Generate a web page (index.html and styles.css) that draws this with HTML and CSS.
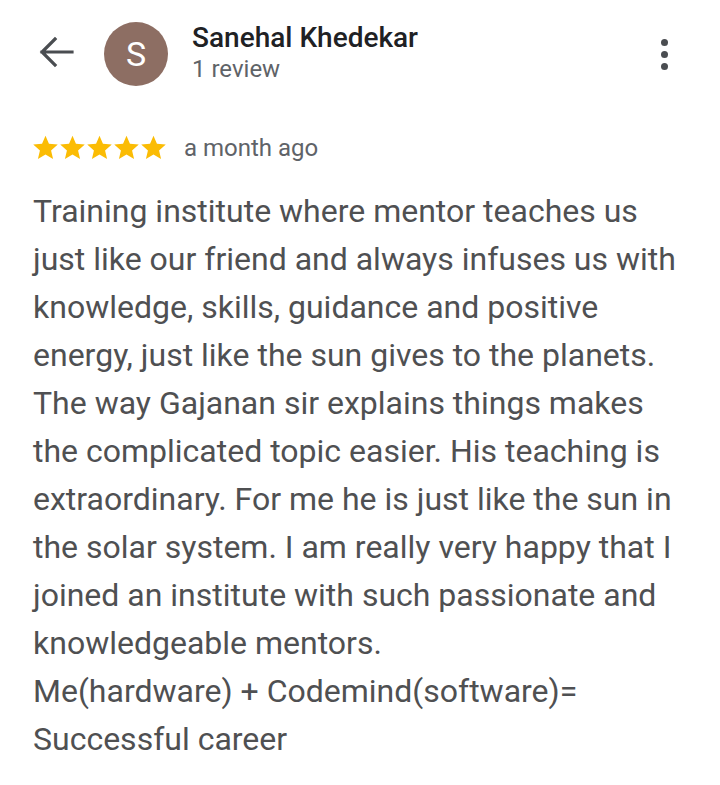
FILE: index.html
```html
<!DOCTYPE html>
<html>
<head>
<meta charset="utf-8">
<link rel="stylesheet" href="styles.css">
</head>
<body>
<div class="page">
  <header class="top">
    <button class="back" aria-label="Back">
      <svg width="36" height="36" viewBox="0 0 36 36"><path d="M34 16H4M17 3L4 16l13 13" fill="none" stroke="#4a4d51" stroke-width="3.2" stroke-linecap="square"/></svg>
    </button>
    <div class="avatar">S</div>
    <div class="who">
      <div class="name">Sanehal Khedekar</div>
      <div class="count">1 review</div>
    </div>
    <button class="more" aria-label="More">
      <span></span><span></span><span></span>
    </button>
  </header>
  <div class="meta">
    <div class="stars">
      <svg viewBox="1 1.5 22 21"><path d="M12 17.27L18.18 21l-1.64-7.03L22 9.24l-7.19-.61L12 2 9.19 8.63 2 9.24l5.46 4.730L5.82 21z"/></svg>
      <svg viewBox="1 1.5 22 21"><path d="M12 17.27L18.18 21l-1.64-7.03L22 9.24l-7.19-.61L12 2 9.19 8.63 2 9.24l5.46 4.73L5.82 21z"/></svg>
      <svg viewBox="1 1.5 22 21"><path d="M12 17.27L18.18 21l-1.64-7.03L22 9.24l-7.19-.61L12 2 9.19 8.63 2 9.24l5.46 4.73L5.82 21z"/></svg>
      <svg viewBox="1 1.5 22 21"><path d="M12 17.27L18.18 21l-1.64-7.03L22 9.24l-7.19-.61L12 2 9.19 8.63 2 9.24l5.46 4.73L5.82 21z"/></svg>
      <svg viewBox="1 1.5 22 21"><path d="M12 17.27L18.18 21l-1.64-7.03L22 9.24l-7.19-.61L12 2 9.19 8.63 2 9.24l5.46 4.73L5.82 21z"/></svg>
    </div>
    <span class="when">a month ago</span>
  </div>
  <p class="text">Training institute where mentor teaches us just like our friend and always infuses us with knowledge, skills, guidance and positive energy, just like the sun gives to the planets. The way Gajanan sir explains things makes the complicated topic easier. His teaching is extraordinary. For me he is just like the sun in the solar system. I am really very happy that I joined an institute with such passionate and knowledgeable mentors.<br>Me(hardware) + Codemind(software)=<br>Successful career</p>
</div>
</body>
</html>
```
FILE: styles.css
```css
* { box-sizing: border-box; }
html, body { margin: 0; padding: 0; background: #fff; }
body { font-family: Roboto, "Noto Sans", sans-serif; }
.page { width: 720px; height: 785px; overflow: hidden; }
.top {
  display: flex;
  align-items: center;
  height: 108px;
}
button { border: 0; background: none; padding: 0; cursor: pointer; }
.back { width: 36px; height: 36px; margin-left: 38px; display: flex; }
.avatar {
  width: 64px; height: 64px; border-radius: 50%;
  background: #8d6e63; color: #fff;
  display: flex; align-items: center; justify-content: center;
  font-size: 34px; margin-left: 30px;
}
.who { margin-left: 24px; flex: 1; margin-top: -2px; }
.name { font-size: 28px; font-weight: 500; color: #202124; line-height: 32px; }
.count { font-size: 24px; color: #5f6368; line-height: 30px; }
.more { width: 12px; display: flex; flex-direction: column; gap: 5px; margin-right: 50px; align-items: center; }
.more span { width: 7px; height: 7px; border-radius: 50%; background: #4a4d51; }
.meta { display: flex; align-items: center; margin: 25px 0 0 32px; height: 30px; }
.stars { display: flex; }
.stars svg { width: 27px; height: 26px; fill: #fbbc04; }
.when { margin-left: 17px; font-size: 24px; color: #5f6368; }
.text {
  margin: 24px 40px 0 33px;
  font-size: 32px; line-height: 48px; color: #4f5052;
}
```
